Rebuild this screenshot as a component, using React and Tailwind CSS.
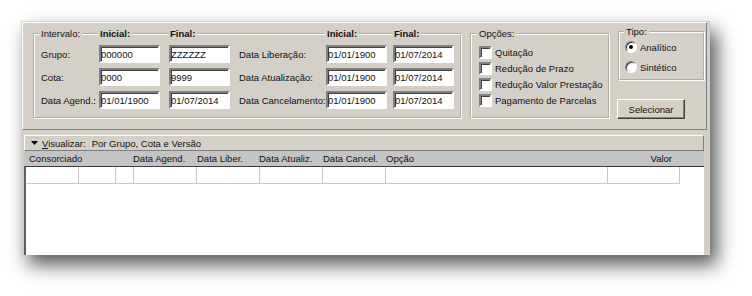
import React from "react";

const sunken =
  "border-2 border-t-[#808080] border-l-[#808080] border-b-white border-r-white shadow-[inset_1px_1px_0_#404040]";

const Field = ({ value }) => (
  <div className={`w-[61px] h-[18px] bg-white ${sunken} flex items-center whitespace-nowrap overflow-hidden`}>
    {value}
  </div>
);

const Line = () => <span className="flex-1 h-0 [border-top:2px_groove_white]" />;

const Check = ({ label }) => (
  <div className="h-[16px] flex items-center ml-[2px]">
    <span className={`w-[13px] h-[13px] bg-white ${sunken}`} />
    <span className="ml-[3px]">{label}</span>
  </div>
);

const Radio = ({ label, checked }) => (
  <div className="h-[20px] flex items-center ml-px">
    <span className="w-[12px] h-[12px] rounded-full bg-white border border-t-[#808080] border-l-[#808080] border-b-white border-r-white shadow-[inset_1px_1px_0_#404040] flex items-center justify-center">
      {checked && <span className="w-[4px] h-[4px] rounded-full bg-black" />}
    </span>
    <span className="ml-[3px]">{label}</span>
  </div>
);

const rows = [
  ["Grupo:", "000000", "ZZZZZZ", "Data Liberação:", "01/01/1900", "01/07/2014"],
  ["Cota:", "0000", "9999", "Data Atualização:", "01/01/1900", "01/07/2014"],
  ["Data Agend.:", "01/01/1900", "01/07/2014", "Data Cancelamento:", "01/01/1900", "01/07/2014"],
];

const cells = [53, 37, 18, 63, 63, 63, 63, 222, 72];

export default function App() {
  return (
    <div className="w-[752px] h-[296px] bg-white pl-[21px] pt-[21px] font-['Liberation_Sans',Arial,sans-serif] text-[9.5px] leading-[11px] text-[#111]">
      <div className="w-[689px] h-[234px] bg-[#d4d0c8] shadow-[7px_10px_18px_rgba(0,0,0,0.65)] overflow-hidden flex flex-col pt-px pl-px">
        {/* filtros */}
        <div className="w-[685px] h-[108px] border border-t-white border-l-white border-b-[#808080] border-r-[#808080] flex items-start pl-[10px] pt-[5px] gap-[8px]">
          <fieldset className="w-[429px] h-[91px] [border:2px_groove_white]">
            <legend className="w-[425px] h-[11px] flex items-center">
              <span className="w-[63px] flex items-center">
                <span className="w-[4px] h-0 [border-top:2px_groove_white]" />
                <span className="px-[2px]">Intervalo:</span>
                <Line />
              </span>
              <span className="w-[70px] flex items-center">
                <span className="px-[2px] font-bold">Inicial:</span>
                <Line />
              </span>
              <span className="w-[157px] flex items-center">
                <span className="px-[2px] font-bold">Final:</span>
                <Line />
              </span>
              <span className="w-[67px] flex items-center">
                <span className="px-[2px] font-bold">Inicial:</span>
                <Line />
              </span>
              <span className="flex-1 flex items-center">
                <span className="px-[2px] font-bold">Final:</span>
                <Line />
              </span>
            </legend>
            <div className="flex flex-col gap-[5px] pl-[6px] pt-[6px]">
              {rows.map((r) => (
                <div key={r[0]} className="flex items-center">
                  <span className="w-[58px] whitespace-nowrap">{r[0]}</span>
                  <Field value={r[1]} />
                  <span className="w-[9px]" />
                  <Field value={r[2]} />
                  <span className="w-[9px]" />
                  <span className="w-[87px] whitespace-nowrap">{r[3]}</span>
                  <Field value={r[4]} />
                  <span className="w-[6px]" />
                  <Field value={r[5]} />
                </div>
              ))}
            </div>
          </fieldset>

          <fieldset className="w-[140px] h-[91px] pl-[5px] [border:2px_groove_white]">
            <legend className="px-[2px] h-[11px]">Opções:</legend>
            <div className="flex flex-col pt-[5px]">
              <Check label="Quitação" />
              <Check label="Redução de Prazo" />
              <Check label="Redução Valor Prestação" />
              <Check label="Pagamento de Parcelas" />
            </div>
          </fieldset>

          <div className="flex flex-col -mt-[2px]">
            <fieldset className="w-[87px] h-[55px] pl-[4px] [border:2px_groove_white]">
              <legend className="px-[2px] h-[11px]">Tipo:</legend>
              <Radio label="Analítico" checked />
              <Radio label="Sintético" />
            </fieldset>
            <button className="mt-[18px] -ml-px w-[68px] h-[20px] border border-t-white border-l-white border-b-[#404040] border-r-[#404040] shadow-[inset_-1px_-1px_0_#808080] flex items-center justify-center">
              Selecionar
            </button>
          </div>
        </div>

        {/* lista */}
        <div className="mt-[5px] ml-[2px] w-[680px] flex-1 flex flex-col">
          <div className="h-[16px] border border-t-white border-l-white border-b-[#808080] border-r-[#808080] flex items-center pl-[6px]">
            <svg width="7" height="4" viewBox="0 0 7 4">
              <polygon points="0,0 7,0 3.5,4" fill="#000" />
            </svg>
            <span className="ml-[4px]">
              <span className="underline">V</span>isualizar:
            </span>
            <span className="ml-[6px]">Por Grupo, Cota e Versão</span>
          </div>
          <div className="h-[15px] bg-[#c4c4c4] flex items-center whitespace-nowrap">
            <span className="w-[109px] pl-[5px]">Consorciado</span>
            <span className="w-[64px]">Data Agend.</span>
            <span className="w-[62px]">Data Liber.</span>
            <span className="w-[64px]">Data Atualiz.</span>
            <span className="w-[63px]">Data Cancel.</span>
            <span className="w-[222px]">Opção</span>
            <span className="w-[72px] text-right pr-[8px]">Valor</span>
          </div>
          <div className="flex-1 bg-white border-t border-t-[#404040] border-l-2 border-l-[#606060]">
            <div className="flex h-[17px]">
              {cells.map((w, i) => (
                <span
                  key={i}
                  className="h-full border-r border-b border-[#c8c8c8]"
                  style={{ width: w }}
                />
              ))}
            </div>
          </div>
        </div>
      </div>
    </div>
  );
}
